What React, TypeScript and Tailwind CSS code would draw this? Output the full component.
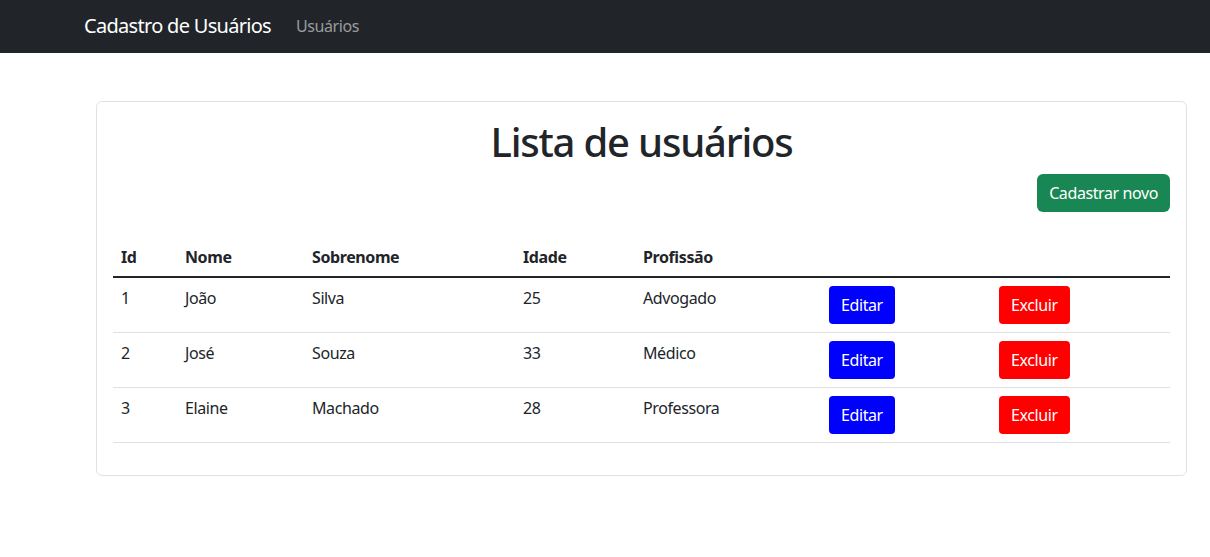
import React from "react";

const rows = [
  { id: 1, nome: "João", sobrenome: "Silva", idade: 25, profissao: "Advogado" },
  { id: 2, nome: "José", sobrenome: "Souza", idade: 33, profissao: "Médico" },
  { id: 3, nome: "Elaine", sobrenome: "Machado", idade: 28, profissao: "Professora" },
];

export default function App() {
  return (
    <div className="min-h-[557px] bg-white text-[#212529] font-['Noto_Sans',sans-serif] text-[16px] tracking-[-0.025em]">
      <nav className="h-[53px] bg-[#212529] flex items-center pl-[84px] pb-[2px]">
        <span className="text-white text-[20px] leading-[30px] mr-[25px] tracking-[-0.035em]">Cadastro de Usuários</span>
        <span className="text-[rgba(255,255,255,0.55)] text-[16px] leading-[24px]">Usuários</span>
      </nav>
      <div className="pt-[48px] pl-[96px] pr-[23px]">
        <div className="border border-[#dee2e6] rounded-[6px] p-[16px]">
          <h1 className="text-center text-[40px] leading-[48px] font-medium mb-[8px] tracking-[-0.03em]">Lista de usuários</h1>
          <div className="flex justify-end">
            <button className="bg-[#198754] text-white rounded-[6px] h-[38px] px-[12px] text-[16px] leading-[24px]">Cadastrar novo</button>
          </div>
          <table className="w-full table-fixed border-collapse mt-[24px] mb-[16px]">
            <colgroup>
              <col className="w-[64px]" />
              <col className="w-[127px]" />
              <col className="w-[211px]" />
              <col className="w-[120px]" />
              <col className="w-[186px]" />
              <col className="w-[170px]" />
              <col />
            </colgroup>
            <thead>
              <tr className="border-b-2 border-[#212529]">
                <th className="text-left font-bold pt-[9px] pb-[7px] px-[8px] leading-[24px]">Id</th>
                <th className="text-left font-bold pt-[9px] pb-[7px] px-[8px] leading-[24px]">Nome</th>
                <th className="text-left font-bold pt-[9px] pb-[7px] px-[8px] leading-[24px]">Sobrenome</th>
                <th className="text-left font-bold pt-[9px] pb-[7px] px-[8px] leading-[24px]">Idade</th>
                <th className="text-left font-bold pt-[9px] pb-[7px] px-[8px] leading-[24px]">Profissão</th>
                <th className="p-[8px]"></th>
                <th className="p-[8px]"></th>
              </tr>
            </thead>
            <tbody>
              {rows.map((r) => (
                <tr key={r.id} className="border-b border-[#dee2e6]">
                  <td className="p-[8px] align-top leading-[24px]">{r.id}</td>
                  <td className="p-[8px] align-top leading-[24px]">{r.nome}</td>
                  <td className="p-[8px] align-top leading-[24px]">{r.sobrenome}</td>
                  <td className="p-[8px] align-top leading-[24px]">{r.idade}</td>
                  <td className="p-[8px] align-top leading-[24px]">{r.profissao}</td>
                  <td className="p-[8px] align-top">
                    <button className="bg-[#0000ff] text-white rounded-[4px] h-[38px] px-[12px] leading-[24px] block">Editar</button>
                  </td>
                  <td className="p-[8px] align-top">
                    <button className="bg-[#ff0000] text-white rounded-[4px] h-[38px] px-[12px] leading-[24px] block">Excluir</button>
                  </td>
                </tr>
              ))}
            </tbody>
          </table>
        </div>
      </div>
    </div>
  );
}
